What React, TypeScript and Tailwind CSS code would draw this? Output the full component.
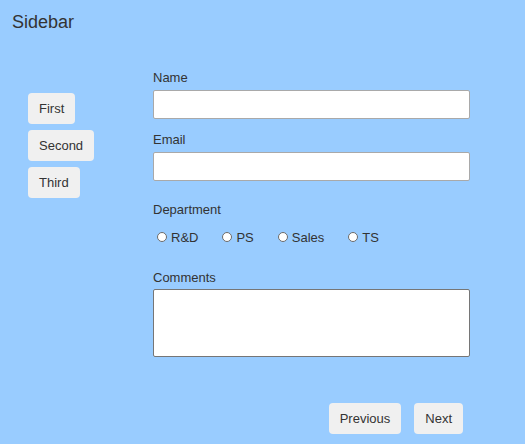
import { useState } from 'react';

const departments = ['R&D', 'PS', 'Sales', 'TS'];
const navItems = ['First', 'Second', 'Third'];

export default function App() {
  const [dept, setDept] = useState('');

  return (
    <div
      className="min-h-screen w-full bg-[#99ccff] text-[#333333]"
      style={{ fontFamily: '"Liberation Sans", Arial, sans-serif' }}
    >
      <h1 className="px-[12px] pt-[12px] text-[18px] leading-[21px]">Sidebar</h1>

      <div className="mt-[37px] flex">
        {/* Sidebar nav */}
        <aside className="flex w-[153px] flex-col items-start gap-[6px] pl-[28px] pt-[23px]">
          {navItems.map((item) => (
            <button
              key={item}
              className="h-[31px] rounded-[4px] bg-[#f0f0f0] px-[11px] text-[13px] leading-[15px] text-[#333]"
            >
              {item}
            </button>
          ))}
        </aside>

        {/* Form */}
        <form className="w-[317px] text-[13px] leading-[15px]">
          <label className="block">Name</label>
          <input
            type="text"
            className="mt-[5px] block h-[29px] w-full rounded-[2px] border border-[#a9a9a9] bg-white px-1"
          />

          <label className="mt-[13px] block">Email</label>
          <input
            type="text"
            className="mt-[5px] block h-[29px] w-full rounded-[2px] border border-[#a9a9a9] bg-white px-1"
          />

          <div className="mt-[21px]">Department</div>
          <div className="mt-[12px] flex h-[16px] items-center gap-[24px] pl-[4px]">
            {departments.map((d) => (
              <label key={d} className="flex items-center gap-[4px]">
                <input
                  type="radio"
                  name="dept"
                  checked={dept === d}
                  onChange={() => setDept(d)}
                  className="h-[10px] w-[10px] appearance-none rounded-full border border-[#6b6b6b] bg-white checked:bg-[#1a73e8]"
                />
                <span>{d}</span>
              </label>
            ))}
          </div>

          <label className="mt-[25px] block">Comments</label>
          <textarea className="mt-[4px] block h-[68px] w-full resize-none rounded-[2px] border border-[#767676] bg-white p-1" />

          <div className="mt-[46px] flex justify-end gap-[13px] pr-[7px]">
            <button
              type="button"
              className="h-[31px] rounded-[4px] bg-[#f0f0f0] px-[11px] text-[13px] text-[#333]"
            >
              Previous
            </button>
            <button
              type="button"
              className="h-[31px] rounded-[4px] bg-[#f0f0f0] px-[11px] text-[13px] text-[#333]"
            >
              Next
            </button>
          </div>
        </form>
      </div>
    </div>
  );
}
